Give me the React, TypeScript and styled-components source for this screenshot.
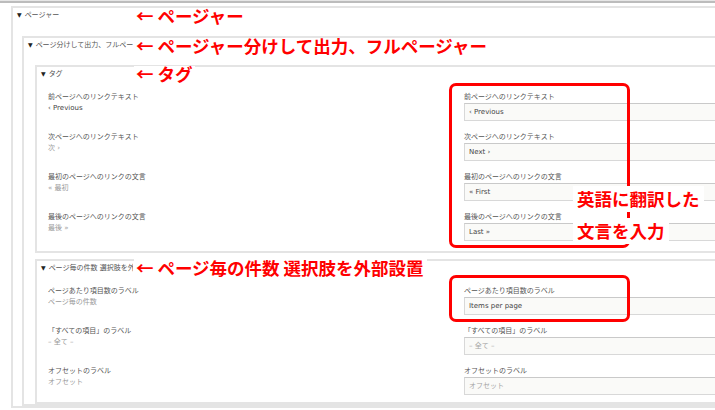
import React from "react";
import styled, { createGlobalStyle } from "styled-components";

const GlobalStyle = createGlobalStyle`
  html, body { margin: 0; padding: 0; background: #fff; overflow: hidden; }
  body { font-family: "DejaVu Sans", "Noto Sans CJK JP", sans-serif; }
  #root { width: 715px; height: 410px; }
`;

const Page = styled.div`
  position: relative;
  width: 715px;
  height: 410px;
  overflow: hidden;
  background: #fff;
`;

const TopBar = styled.div`
  height: 1px;
  background: #e6e6e6;
  border-bottom: 2px solid #bcbcbc;
`;

const Details = styled.section<{ $ml: number; $mt: number }>`
  margin: ${(p) => p.$mt}px -80px 0 ${(p) => p.$ml}px;
  border: 2px solid #e4e4e4;
  background: #fff;
`;

const Summary = styled.div<{ $h: number; $w: number }>`
  display: flex;
  align-items: flex-start;
  gap: 3px;
  width: ${(p) => p.$w}px;
  height: ${(p) => p.$h}px;
  box-sizing: border-box;
  padding: 2px 0 0 4px;
  font-size: 7px;
  line-height: 10px;
  color: #555;
  white-space: nowrap;
  overflow: hidden;
`;

const Caret = styled.span`
  font-size: 6px;
  color: #222;
  line-height: 10px;
`;

const Rows = styled.div<{ $pb: number }>`
  display: flex;
  flex-direction: column;
  gap: 11px;
  padding: 0 0 ${(p) => p.$pb}px 11px;
`;

const Row = styled.div`
  display: grid;
  grid-template-columns: 416px 330px;
  height: 29px;
`;

const Cell = styled.div`
  display: flex;
  flex-direction: column;
`;

const Label = styled.div`
  font-size: 7px;
  line-height: 11px;
  color: #555;
  white-space: nowrap;
`;

const Value = styled.div<{ $dim?: boolean }>`
  font-size: 7px;
  line-height: 11px;
  color: ${(p) => (p.$dim ? "#9a9a9a" : "#444")};
  white-space: nowrap;
`;

const Field = styled.input`
  box-sizing: border-box;
  width: 330px;
  height: 18px;
  margin: 0;
  padding: 0 4px;
  border: 1px solid #d8d8d8;
  border-top-color: #c9c9c9;
  background: #fafaf8;
  font-family: "DejaVu Sans", "Noto Sans CJK JP", sans-serif;
  font-size: 7px;
  color: #444;
  outline: none;
  &::placeholder { color: #a5a5a5; }
`;

const Note = styled.div<{ $top: number; $h: number }>`
  position: absolute;
  left: 134px;
  top: ${(p) => p.$top}px;
  height: ${(p) => p.$h}px;
  line-height: ${(p) => p.$h}px;
  padding: 0 3px 0 2px;
  background: #fff;
  color: #f00;
  font-family: "Noto Sans CJK JP", sans-serif;
  font-weight: 700;
  font-size: 17.5px;
  white-space: nowrap;
`;

const RedBox = styled.div<{ $top: number; $h: number }>`
  position: absolute;
  left: 449px;
  top: ${(p) => p.$top}px;
  width: 181px;
  height: ${(p) => p.$h}px;
  box-sizing: border-box;
  border: 3px solid #f00;
  border-radius: 7px;
`;

const Callout = styled.div`
  position: absolute;
  left: 573px;
  top: 186px;
  display: flex;
  flex-direction: column;
  align-items: flex-start;
  gap: 6px;
`;

const CalloutLine = styled.div`
  height: 26px;
  line-height: 26px;
  padding: 0 4px;
  background: #fff;
  color: #f00;
  font-family: "Noto Sans CJK JP", sans-serif;
  font-weight: 700;
  font-size: 17.5px;
  white-space: nowrap;
`;

type Item = {
  label: string;
  src: string;
  srcDim?: boolean;
  value?: string;
  placeholder?: string;
};

const tagItems: Item[] = [
  { label: "前ページへのリンクテキスト", src: "‹ Previous", value: "‹ Previous" },
  { label: "次ページへのリンクテキスト", src: "次 ›", srcDim: true, value: "Next ›" },
  { label: "最初のページへのリンクの文言", src: "« 最初", srcDim: true, value: "« First" },
  { label: "最後のページへのリンクの文言", src: "最後 »", srcDim: true, value: "Last »" },
];

const perPageItems: Item[] = [
  { label: "ページあたり項目数のラベル", src: "ページ毎の件数", srcDim: true, value: "Items per page" },
  { label: "「すべての項目」のラベル", src: "– 全て –", srcDim: true, placeholder: "– 全て –" },
  { label: "オフセットのラベル", src: "オフセット", srcDim: true, placeholder: "オフセット" },
];

function ItemRows({ items, pb }: { items: Item[]; pb: number }) {
  return (
    <Rows $pb={pb}>
      {items.map((it) => (
        <Row key={it.label}>
          <Cell>
            <Label>{it.label}</Label>
            <Value $dim={it.srcDim}>{it.src}</Value>
          </Cell>
          <Cell>
            <Label>{it.label}</Label>
            <Field readOnly value={it.value ?? ""} placeholder={it.placeholder} />
          </Cell>
        </Row>
      ))}
    </Rows>
  );
}

export default function App() {
  return (
    <>
      <GlobalStyle />
      <Page>
        <TopBar />
        <Details $ml={11} $mt={3}>
          <Summary $h={28} $w={120}>
            <Caret>▼</Caret>ページャー
          </Summary>
          <Details $ml={9} $mt={0}>
            <Summary $h={27} $w={109}>
              <Caret>▼</Caret>ページ分けして出力、フルページャー
            </Summary>
            <Details $ml={11} $mt={0}>
              <Summary $h={25} $w={96}>
                <Caret>▼</Caret>タグ
              </Summary>
              <ItemRows items={tagItems} pb={10} />
            </Details>
            <Details $ml={11} $mt={6}>
              <Summary $h={25} $w={96}>
                <Caret>▼</Caret>ページ毎の件数 選択肢を外部設置
              </Summary>
              <ItemRows items={perPageItems} pb={7} />
            </Details>
          </Details>
        </Details>

        <Note $top={8} $h={16}>← ページャー</Note>
        <Note $top={38} $h={15}>← ページャー分けして出力、フルページャー</Note>
        <Note $top={66} $h={16}>← タグ</Note>
        <Note $top={258} $h={20}>← ページ毎の件数 選択肢を外部設置</Note>

        <RedBox $top={83} $h={165} />
        <RedBox $top={275} $h={47} />
        <Callout>
          <CalloutLine>英語に翻訳した</CalloutLine>
          <CalloutLine>文言を入力</CalloutLine>
        </Callout>
      </Page>
    </>
  );
}
